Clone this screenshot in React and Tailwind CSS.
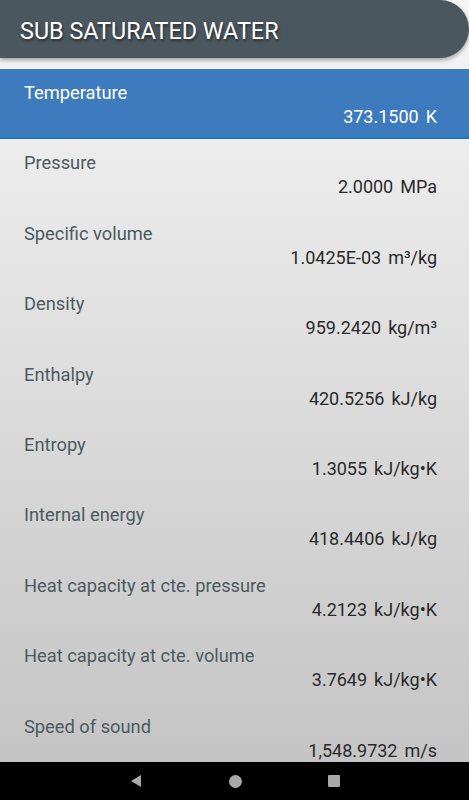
import React from 'react';

const rows = [
  { label: 'Pressure', value: '2.0000', unit: 'MPa' },
  { label: 'Specific volume', value: '1.0425E-03', unit: 'm³/kg' },
  { label: 'Density', value: '959.2420', unit: 'kg/m³' },
  { label: 'Enthalpy', value: '420.5256', unit: 'kJ/kg' },
  { label: 'Entropy', value: '1.3055', unit: 'kJ/kg•K' },
  { label: 'Internal energy', value: '418.4406', unit: 'kJ/kg' },
  { label: 'Heat capacity at cte. pressure', value: '4.2123', unit: 'kJ/kg•K' },
  { label: 'Heat capacity at cte. volume', value: '3.7649', unit: 'kJ/kg•K' },
  { label: 'Speed of sound', value: '1,548.9732', unit: 'm/s' },
];

const Row = ({ label, value, unit, active }) => (
  <div
    className={
      'shrink-0 h-[70.4px] pl-6 pr-8 pt-[12px] ' +
      (active ? 'bg-[#3e7bbe] border-b-2 border-[#1c74c9] text-white' : '')
    }
  >
    <div className={'text-[18.3px] leading-6 ' + (active ? 'text-white' : 'text-[#4c5a60]')}>{label}</div>
    <div className={'text-[18px] leading-6 text-right ' + (active ? 'text-white' : 'text-[#2a2a2a]')}>
      {value}
      <span className="ml-[7px]">{unit}</span>
    </div>
  </div>
);

export default function App() {
  return (
    <div
      className="w-[469px] h-[800px] flex flex-col overflow-hidden bg-gradient-to-b from-[#f6f6f6] to-[#c2c2c2]"
      style={{ fontFamily: 'Roboto, "Noto Sans", sans-serif' }}
    >
      <div className="shrink-0 h-[58px] bg-[#4b575e] rounded-r-[29px] shadow-[0_2px_4px_rgba(0,0,0,0.35)] flex items-center pl-5 pt-[5px]">
        <h1 className="text-white text-[23.4px] [text-shadow:1px_2px_3px_rgba(0,0,0,0.5)]">SUB SATURATED WATER</h1>
      </div>
      <div className="flex-1 flex flex-col overflow-hidden pt-[11px]">
        <Row label="Temperature" value="373.1500" unit="K" active />
        {rows.map(r => (
          <Row key={r.label} {...r} />
        ))}
      </div>
      <div className="shrink-0 h-[38px] bg-black flex items-center justify-center gap-[86px]">
        <svg width="14" height="14" viewBox="0 0 14 14">
          <polygon points="12,1 12,13 2,7" fill="#a9a9a9" />
        </svg>
        <div className="w-[13px] h-[13px] rounded-full bg-[#a9a9a9]" />
        <div className="w-[12px] h-[12px] rounded-[1px] bg-[#a9a9a9]" />
      </div>
    </div>
  );
}
